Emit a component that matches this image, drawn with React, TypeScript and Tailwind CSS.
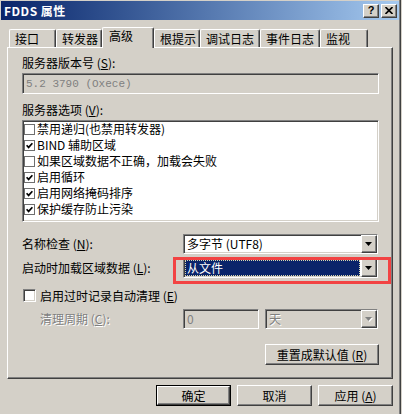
import React from 'react'

const raised =
  'border border-t-white border-l-white border-r-[#404040] border-b-[#404040] shadow-[inset_-1px_-1px_#808080]'
const sunken =
  'border border-t-[#808080] border-l-[#808080] border-r-white border-b-white shadow-[inset_1px_1px_#404040,inset_-1px_-1px_#d4d0c8]'

const tabs = [
  { label: '接口', w: 'w-[47px]' },
  { label: '转发器', w: 'w-[46px]' },
  { label: '高级', w: 'w-[52px]', active: true },
  { label: '根提示', w: 'w-[46px]' },
  { label: '调试日志', w: 'w-[60px]' },
  { label: '事件日志', w: 'w-[60px]' },
  { label: '监视', w: 'w-[48px]' },
]

const options = [
  { text: '禁用递归(也禁用转发器)', on: false },
  { text: 'BIND 辅助区域', on: true },
  { text: '如果区域数据不正确，加载会失败', on: false },
  { text: '启用循环', on: true },
  { text: '启用网络掩码排序', on: true },
  { text: '保护缓存防止污染', on: true },
]

function Arrow({ disabled }: { disabled?: boolean }) {
  return (
    <svg width="8" height="5" viewBox="0 0 8 5" className="overflow-visible">
      {disabled && <polygon points="1,1 8,1 4.5,5" fill="#ffffff" />}
      <polygon points="0,0 7,0 3.5,4" fill={disabled ? '#808080' : '#000000'} />
    </svg>
  )
}

function Combo({
  className,
  text,
  selected,
  disabled,
}: {
  className: string
  text: string
  selected?: boolean
  disabled?: boolean
}) {
  return (
    <div className={`${sunken} ${className} h-[20px] flex ${disabled ? 'bg-[#d4d0c8]' : 'bg-white'}`}>
      <div className="flex-1 flex items-stretch p-[1px]">
        {selected ? (
          <div className="flex-1 flex items-center pl-[1px] bg-[#0a246a] text-white border border-dotted border-[#d8d8b0]">
            {text}
          </div>
        ) : (
          <div
            className={`flex-1 flex items-center pl-[2px] ${disabled ? 'text-[#808080] [text-shadow:1px_1px_#ffffff]' : 'text-black'}`}
          >
            {text}
          </div>
        )}
      </div>
      <div className={`${raised} bg-[#d4d0c8] w-[16px] flex items-center justify-center`}>
        <Arrow disabled={disabled} />
      </div>
    </div>
  )
}

function Button({ children, isDefault, className }: { children: React.ReactNode; isDefault?: boolean; className: string }) {
  if (isDefault) {
    return (
      <div className={`${className} h-[21px] border border-black flex`}>
        <div className={`${raised} flex-1 flex items-center justify-center bg-[#d4d0c8]`}>{children}</div>
      </div>
    )
  }
  return (
    <div className={`${raised} ${className} h-[21px] flex items-center justify-center bg-[#d4d0c8]`}>{children}</div>
  )
}

function ListCheck({ on }: { on: boolean }) {
  return (
    <div className="w-[11px] h-[11px] border border-[#6f6f6f] bg-white flex items-center justify-center">
      {on && (
        <svg width="7" height="7" viewBox="0 0 7 7">
          <path d="M0.6 3.2 L2.6 5.4 L6.4 1.2" fill="none" stroke="#000" strokeWidth="1.7" />
        </svg>
      )}
    </div>
  )
}

export default function App() {
  return (
    <div className="w-[402px] h-[414px] bg-[#d4d0c8] overflow-hidden">
      <div className="relative w-[401px] h-[414px] bg-[#d4d0c8] border-r border-r-[#404040] shadow-[inset_-1px_0_#808080] font-['Noto_Sans_CJK_SC',sans-serif] text-[12px] leading-[14px] text-black">
        {/* title bar */}
        <div className="ml-[1px] pt-[1px]">
          <div className="w-[398px] h-[19px] flex items-center justify-between bg-gradient-to-r from-[#0a246a] to-[#a6caf0]">
            <div className="pl-[3px] text-white font-bold text-[12px] tracking-[0.5px]">FDDS 属性</div>
            <div className="flex gap-[2px] pr-[2px]">
              <div className={`${raised} w-[16px] h-[14px] bg-[#d4d0c8] flex items-center justify-center text-[11px] font-bold leading-none font-['Liberation_Sans',sans-serif]`}>
                ?
              </div>
              <div className={`${raised} w-[16px] h-[14px] bg-[#d4d0c8] flex items-center justify-center`}>
                <svg width="8" height="7" viewBox="0 0 8 7">
                  <path d="M0.5 0 L7.5 7 M7.5 0 L0.5 7" stroke="#000" strokeWidth="1.6" />
                </svg>
              </div>
            </div>
          </div>
        </div>

        {/* tabs */}
        <div className="mt-[7px] ml-[9px] h-[21px] flex items-end relative z-10">
          {tabs.map((t) =>
            t.active ? (
              <div
                key={t.label}
                className={`${t.w} h-[21px] bg-[#d4d0c8] border-t border-l border-r border-t-white border-l-white border-r-[#404040] shadow-[inset_-1px_0_#808080] rounded-t-[2px] pl-[6px] pt-[1px]`}
              >
                {t.label}
              </div>
            ) : (
              <div
                key={t.label}
                className={`${t.w} h-[18px] mb-[1px] border-t border-l border-r border-t-white border-l-white border-r-[#404040] shadow-[inset_-1px_0_#808080] rounded-t-[2px] pl-[5px] flex items-center`}
              >
                {t.label}
              </div>
            ),
          )}
        </div>

        {/* panel */}
        <div className="-mt-[1px] ml-[7px] w-[386px] h-[332px] border border-t-white border-l-white border-r-[#404040] border-b-[#404040] shadow-[inset_-1px_-1px_#808080]">
          <div className="pl-[14px] pt-[8px] w-[371px]">
            <div className="h-[14px]">
              服务器版本号 (<u>S</u>):
            </div>
            <div className={`${sunken} mt-[3px] w-[357px] h-[21px] flex items-center pl-[3px] text-[#808080] font-['Liberation_Mono',monospace] text-[11px]`}>
              5.2 3790 (Oxece)
            </div>

            <div className="mt-[9px] h-[14px]">
              服务器选项 (<u>V</u>):
            </div>
            <div className={`${sunken} mt-[3px] w-[357px] h-[102px] bg-white pl-[1px] pt-[0px]`}>
              {options.map((o) => (
                <div key={o.text} className="h-[16px] flex items-center gap-[2px]">
                  <ListCheck on={o.on} />
                  <span>{o.text}</span>
                </div>
              ))}
            </div>

            <div className="mt-[12px] h-[20px] flex items-center">
              <div className="w-[161px]">
                名称检查 (<u>N</u>):
              </div>
              <Combo className="w-[195px]" text="多字节 (UTF8)" />
            </div>
            <div className="mt-[4px] h-[20px] flex items-center">
              <div className="w-[161px]">
                启动时加载区域数据 (<u>L</u>):
              </div>
              <Combo className="w-[195px]" text="从文件" selected />
            </div>

            <div className="mt-[11px] h-[13px] flex items-center gap-[4px] pl-[1px]">
              <div className={`${sunken} w-[13px] h-[13px] bg-white`} />
              <span>
                启用过时记录自动清理 (<u>E</u>)
              </span>
            </div>

            <div className="mt-[7px] h-[20px] flex items-center">
              <div className="w-[161px] pl-[18px] text-[#808080] [text-shadow:1px_1px_#ffffff]">
                清理周期 (<u>C</u>):
              </div>
              <div className={`${sunken} w-[76px] h-[20px] bg-[#d4d0c8] flex items-center pl-[3px] text-[#808080]`}>0</div>
              <Combo className="w-[113px] ml-[6px]" text="天" disabled />
            </div>

            <div className="mt-[15px] w-[357px] flex justify-end">
              <Button className="w-[114px]">
                重置成默认值 (<u>R</u>)
              </Button>
            </div>
          </div>
        </div>

        {/* dialog buttons */}
        <div className="mt-[6px] w-[393px] flex justify-end gap-[6px]">
          <Button className="w-[75px]" isDefault>
            确定
          </Button>
          <Button className="w-[75px]">取消</Button>
          <Button className="w-[75px]">
            应用 (<u>A</u>)
          </Button>
        </div>

        {/* red annotation */}
        <div className="absolute left-[173px] top-[257px] w-[218px] h-[27px] border-[3px] border-[#f24343] pointer-events-none" />
      </div>
    </div>
  )
}
